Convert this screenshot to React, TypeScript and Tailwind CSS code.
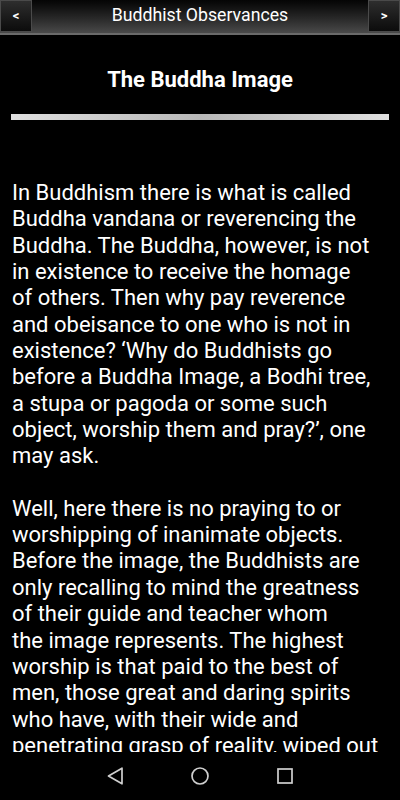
import React from 'react';

// Line breaks follow the device's own paragraph breaking
const paragraphs = [
  [
    'In Buddhism there is what is called',
    'Buddha vandana or reverencing the',
    'Buddha. The Buddha, however, is not',
    'in existence to receive the homage',
    'of others. Then why pay reverence',
    'and obeisance to one who is not in',
    'existence? \u2018Why do Buddhists go',
    'before a Buddha Image, a Bodhi tree,',
    'a stupa or pagoda or some such',
    'object, worship them and pray?\u2019, one',
    'may ask.',
  ],
  [
    'Well, here there is no praying to or',
    'worshipping of inanimate objects.',
    'Before the image, the Buddhists are',
    'only recalling to mind the greatness',
    'of their guide and teacher whom',
    'the image represents. The highest',
    'worship is that paid to the best of',
    'men, those great and daring spirits',
    'who have, with their wide and',
    'penetrating grasp of reality, wiped out',
  ],
];

function NavButton({ label }: { label: string }) {
  return (
    <div className="flex h-[32px] w-[32px] items-center justify-center border border-[#4a4a4a] bg-gradient-to-b from-[#2e2e2e] to-[#0c0c0c] text-[13px] font-bold text-white">
      {label}
    </div>
  );
}

export default function App() {
  return (
    <div
      className="flex h-[800px] w-[400px] flex-col overflow-hidden bg-black text-white"
      style={{ fontFamily: 'Roboto, "Noto Sans", sans-serif' }}
    >
      {/* Header */}
      <div className="flex h-[35px] shrink-0 items-start justify-between border-b-2 border-[#6a6a6a] bg-gradient-to-b from-[#050505] to-[#4a4a4a]">
        <NavButton label="<" />
        <span className="pt-[4px] text-[17.7px] leading-[22px] text-white">Buddhist Observances</span>
        <NavButton label=">" />
      </div>

      {/* Content */}
      <div className="flex min-h-0 flex-1 flex-col overflow-hidden">
        <h1 className="shrink-0 pt-[31px] text-center text-[22px] font-bold leading-[28px]">The Buddha Image</h1>
        <div className="mx-[11px] mt-[20px] h-[6px] shrink-0 bg-gradient-to-r from-[#e0e0e0] via-[#b8b8b8] to-[#e0e0e0]" />
        <div className="shrink-0 pl-[12px] pt-[60px] text-[22px] leading-[26.35px]">
          {paragraphs.map((lines, i) => (
            <p key={i} className={i > 0 ? 'mt-[26px]' : ''}>
              {lines.map((line, j) => (
                <span key={j} className="block whitespace-nowrap">
                  {line}
                </span>
              ))}
            </p>
          ))}
        </div>
      </div>

      {/* Android nav bar */}
      <div className="flex h-[48px] shrink-0 items-center justify-center gap-[68px] bg-black">
        <svg width="16" height="18" viewBox="0 0 16 18" fill="none" stroke="#cfcfcf" strokeWidth="1.7">
          <path d="M15 1.2 L1.5 9 L15 16.8 Z" strokeLinejoin="round" />
        </svg>
        <svg width="18" height="18" viewBox="0 0 18 18" fill="none" stroke="#cfcfcf" strokeWidth="1.7">
          <circle cx="9" cy="9" r="8" />
        </svg>
        <svg width="16" height="16" viewBox="0 0 16 16" fill="none" stroke="#cfcfcf" strokeWidth="1.7">
          <rect x="1" y="1" width="14" height="14" />
        </svg>
      </div>
    </div>
  );
}
